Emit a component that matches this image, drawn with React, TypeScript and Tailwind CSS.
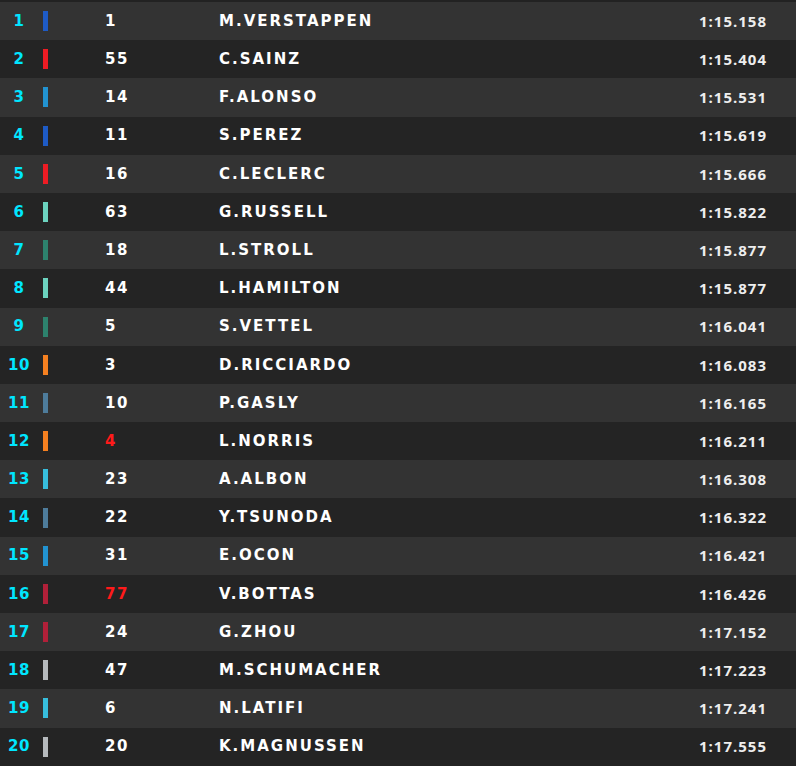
const drivers = [
  { pos: 1, num: "1", name: "M.VERSTAPPEN", time: "1:15.158", team: "bg-[#1e5bc6]" },
  { pos: 2, num: "55", name: "C.SAINZ", time: "1:15.404", team: "bg-[#ed1c24]" },
  { pos: 3, num: "14", name: "F.ALONSO", time: "1:15.531", team: "bg-[#2293d1]" },
  { pos: 4, num: "11", name: "S.PEREZ", time: "1:15.619", team: "bg-[#1e5bc6]" },
  { pos: 5, num: "16", name: "C.LECLERC", time: "1:15.666", team: "bg-[#ed1c24]" },
  { pos: 6, num: "63", name: "G.RUSSELL", time: "1:15.822", team: "bg-[#6cd3bf]" },
  { pos: 7, num: "18", name: "L.STROLL", time: "1:15.877", team: "bg-[#2d826d]" },
  { pos: 8, num: "44", name: "L.HAMILTON", time: "1:15.877", team: "bg-[#6cd3bf]" },
  { pos: 9, num: "5", name: "S.VETTEL", time: "1:16.041", team: "bg-[#2d826d]" },
  { pos: 10, num: "3", name: "D.RICCIARDO", time: "1:16.083", team: "bg-[#f58020]" },
  { pos: 11, num: "10", name: "P.GASLY", time: "1:16.165", team: "bg-[#4e7c9b]" },
  { pos: 12, num: "4", name: "L.NORRIS", time: "1:16.211", team: "bg-[#f58020]", red: true },
  { pos: 13, num: "23", name: "A.ALBON", time: "1:16.308", team: "bg-[#37bedd]" },
  { pos: 14, num: "22", name: "Y.TSUNODA", time: "1:16.322", team: "bg-[#4e7c9b]" },
  { pos: 15, num: "31", name: "E.OCON", time: "1:16.421", team: "bg-[#2293d1]" },
  { pos: 16, num: "77", name: "V.BOTTAS", time: "1:16.426", team: "bg-[#b12039]", red: true },
  { pos: 17, num: "24", name: "G.ZHOU", time: "1:17.152", team: "bg-[#b12039]" },
  { pos: 18, num: "47", name: "M.SCHUMACHER", time: "1:17.223", team: "bg-[#b6babd]" },
  { pos: 19, num: "6", name: "N.LATIFI", time: "1:17.241", team: "bg-[#37bedd]" },
  { pos: 20, num: "20", name: "K.MAGNUSSEN", time: "1:17.555", team: "bg-[#b6babd]" },
];

export default function App() {
  return (
    <div className="w-[796px] h-[766px] bg-[#222222] pt-[2px] overflow-hidden font-['DejaVu_Sans',sans-serif]">
      {drivers.map((d, i) => (
        <div
          key={d.pos}
          className={`flex items-center h-[38.2px] ${i % 2 === 0 ? "bg-[#333333]" : "bg-[#242424]"}`}
        >
          <div className="w-[38px] text-center text-[15px] font-bold text-[#00e6ff] tracking-[0.5px]">{d.pos}</div>
          <div className={`ml-[5px] w-[5px] h-[20px] ${d.team}`} />
          <div className={`ml-[57px] w-[114px] text-[15px] font-bold tracking-[1.5px] ${d.red ? "text-[#ff1a1a]" : "text-white"}`}>
            {d.num}
          </div>
          <div className="flex-1 text-[15px] font-bold tracking-[2px] text-white">{d.name}</div>
          <div className="mr-[29px] text-[15px] font-bold tracking-[1px] text-[#eeeeee] font-['Open_Sans',sans-serif]">{d.time}</div>
        </div>
      ))}
    </div>
  );
}
